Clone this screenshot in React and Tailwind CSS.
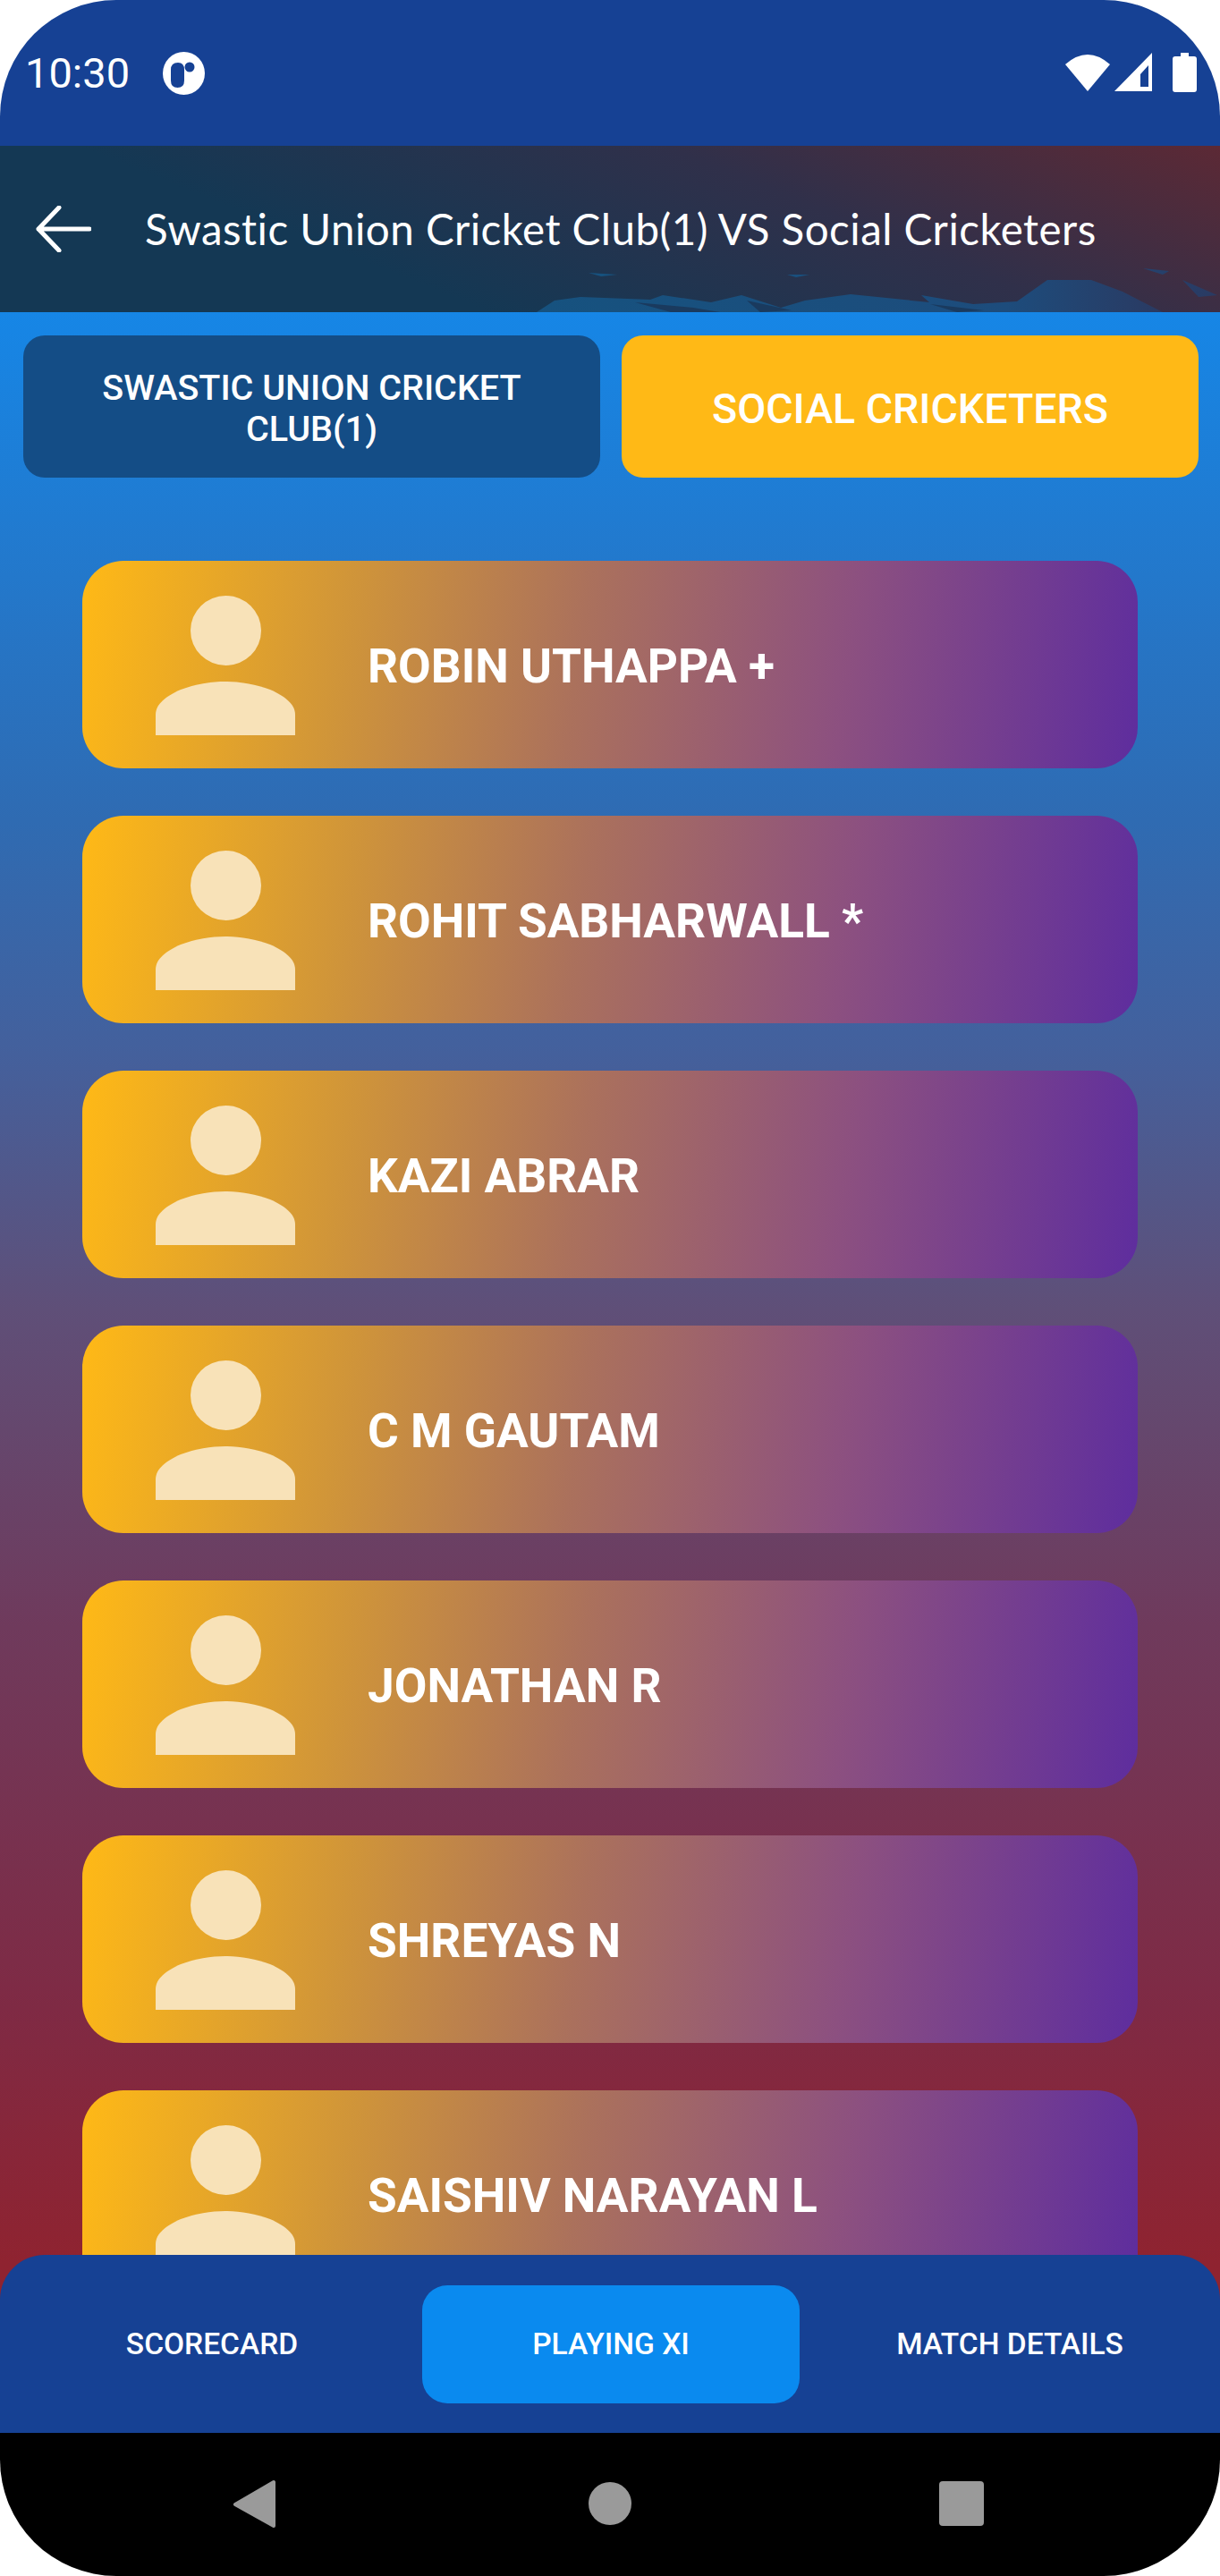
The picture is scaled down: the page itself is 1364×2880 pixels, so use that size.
const players = [
  "ROBIN UTHAPPA +",
  "ROHIT SABHARWALL *",
  "KAZI ABRAR",
  "C M GAUTAM",
  "JONATHAN R",
  "SHREYAS N",
  "SAISHIV NARAYAN L",
];

function StatusBar() {
  return (
    <div className="h-[163px] shrink-0 bg-[#164194] flex items-start justify-between pt-[58px] pl-[28px] pr-[26px] text-white">
      <div className="flex items-center gap-[37px] h-[48px]">
        <span className="text-[47px] leading-[50px] font-normal">10:30</span>
        <svg width="47" height="48" viewBox="0 0 47 48">
          <ellipse cx="23.5" cy="24" rx="23.5" ry="24" fill="#fff" />
          <path d="M9 20 Q9 12 17 12 Q24 12 24 20 V32 Q24 40 16.5 40 Q9 40 9 32 Z" fill="#164194" />
          <circle cx="30" cy="17" r="5.5" fill="#164194" />
        </svg>
      </div>
      <div className="flex items-start gap-[5px] pt-[1px]">
        <svg width="50" height="43" viewBox="0 0 50 43">
          <path d="M25 43 L0 13 Q25 -9 50 13 Z" fill="#fff" />
        </svg>
        <svg width="42" height="43" viewBox="0 0 42 43">
          <path fillRule="evenodd" d="M42 0 V43 H0 Z M38 14 L29 24 V38 H38 Z" fill="#fff" />
        </svg>
        <svg width="27" height="44" viewBox="0 0 27 44" className="ml-[18px]">
          <path d="M9 0 H18 V4 H24 Q27 4 27 7 V41 Q27 44 24 44 H3 Q0 44 0 41 V7 Q0 4 3 4 H9 Z" fill="#fff" />
        </svg>
      </div>
    </div>
  );
}

function Header() {
  return (
    <div className="relative h-[186px] shrink-0 overflow-hidden bg-[linear-gradient(22deg,#143854_0%,#143854_30%,#30304a_66%,#5c2935_100%)] flex items-center pl-[40px] text-white">
      {/* brush strokes along the lower edge */}
      <svg className="absolute right-0 bottom-0" width="764" height="49" viewBox="0 0 764 49">
        <defs>
          <linearGradient id="stroke" x1="0" y1="0" x2="1" y2="0">
            <stop offset="0" stopColor="#16527f" />
            <stop offset="0.75" stopColor="#1d4c7c" />
            <stop offset="1" stopColor="#2a3a62" />
          </linearGradient>
        </defs>
        <path d="M0 49 L20 36 L49 32 L127 35 L141 30 L195 38 L229 30 L273 44 L300 36 L351 29 L439 38 L430 30 L488 40 L537 37 L571 13 L620 13 L655 26 L700 49 Z" fill="url(#stroke)" />
        <path d="M58 5 L90 7 L72 9 Z M280 7 L305 7 L290 10 Z M678 0 L707 3 L700 7 Z M722 13 L761 30 L740 32 Z" fill="url(#stroke)" />
        {/* dark streaks cut through the strokes */}
        <path d="M110 38 L175 44 L205 49 L150 49 Z M235 36 L285 47 L250 49 Z M440 40 L500 47 L470 49 Z" fill="#1a3a5e" />
      </svg>
      <svg width="62" height="52" viewBox="0 0 62 52" className="relative shrink-0">
        <path d="M60 26 H3 M26 2 L3 26 L26 50" fill="none" stroke="#fff" strokeWidth="5" strokeLinecap="round" strokeLinejoin="round" />
      </svg>
      <h1 className="relative ml-[60px] text-[47.5px] leading-[56px] font-normal whitespace-nowrap font-['Lato',sans-serif] tracking-[0.48px]">
        Swastic Union Cricket Club(1) VS Social Cricketers
      </h1>
    </div>
  );
}

function TeamTabs() {
  return (
    <div className="grid grid-cols-2 gap-[24px] pl-[26px] pr-[24px] pt-[26px]">
      <button className="h-[159px] rounded-[24px] bg-[#144d86] text-white text-[39.5px] leading-[46px] font-medium px-[60px] pt-[5px]">
        SWASTIC UNION CRICKET CLUB(1)
      </button>
      <button className="h-[159px] rounded-[24px] bg-[#ffb916] text-white text-[46.5px] leading-[52px] font-medium pt-[5px]">
        SOCIAL CRICKETERS
      </button>
    </div>
  );
}

function PlayerCard({ name }) {
  return (
    <div className="h-[232px] shrink-0 rounded-[46px] bg-[linear-gradient(98deg,#ffb916_0%,#d09539_25%,#ab715c_47%,#8c5080_72%,#5e2d9e_100%)] flex items-center pl-[82px] text-white">
      <svg width="156" height="156" viewBox="0 0 156 156" className="shrink-0 mt-[1px]">
        <ellipse cx="78.5" cy="39" rx="39.5" ry="39" fill="#f8e2b8" />
        <path d="M0 156 V133 C0 121 12 112 28 105 C44 99 62 96 78 96 C94 96 112 99 128 105 C144 112 156 121 156 133 V156 Z" fill="#f8e2b8" />
      </svg>
      <span className="ml-[81px] text-[53.2px] leading-[60px] font-bold whitespace-nowrap pt-[3px]">{name}</span>
    </div>
  );
}

function BottomTabs() {
  return (
    <div className="absolute inset-x-0 bottom-0 h-[199px] rounded-t-[50px] bg-[#164194] flex items-center text-white text-[33.5px] font-medium">
      <div className="w-[474px] text-center pt-[2px]">SCORECARD</div>
      <div className="-ml-[2px] w-[422px] h-[132px] rounded-[28px] bg-[#0a8aef] flex items-center justify-center pt-[2px]">PLAYING XI</div>
      <div className="flex-1 text-center pt-[2px]">MATCH DETAILS</div>
    </div>
  );
}

function NavBar() {
  return (
    <div className="h-[160px] shrink-0 bg-black relative">
      <svg className="absolute inset-0" width="1364" height="160" viewBox="0 0 1364 160">
        <path d="M306 55 V104 L263 80 Z" fill="#9a9a9a" stroke="#9a9a9a" strokeWidth="4" strokeLinejoin="round" />
        <circle cx="682" cy="79" r="24" fill="#9a9a9a" />
        <rect x="1050" y="54" width="50" height="50" rx="4" fill="#9a9a9a" />
      </svg>
    </div>
  );
}

export default function App() {
  return (
    <div className="w-[1364px] h-[2880px] bg-white font-['Roboto',sans-serif]">
      <div className="w-full h-full rounded-[130px] overflow-hidden flex flex-col">
        <StatusBar />
        <Header />
        <main className="relative flex-1 overflow-hidden bg-[linear-gradient(180deg,#1686e6_0%,#2f6bb2_24%,#44609c_35%,#5f4f78_47%,#6f3a5c_62%,#7f2a44_80%,#8f2330_92%,#8f2330_100%)]">
          <TeamTabs />
          <div className="flex flex-col gap-[53px] px-[92px] pt-[93px]">
            {players.map((p) => (
              <PlayerCard key={p} name={p} />
            ))}
          </div>
          <BottomTabs />
        </main>
        <NavBar />
      </div>
    </div>
  );
}
